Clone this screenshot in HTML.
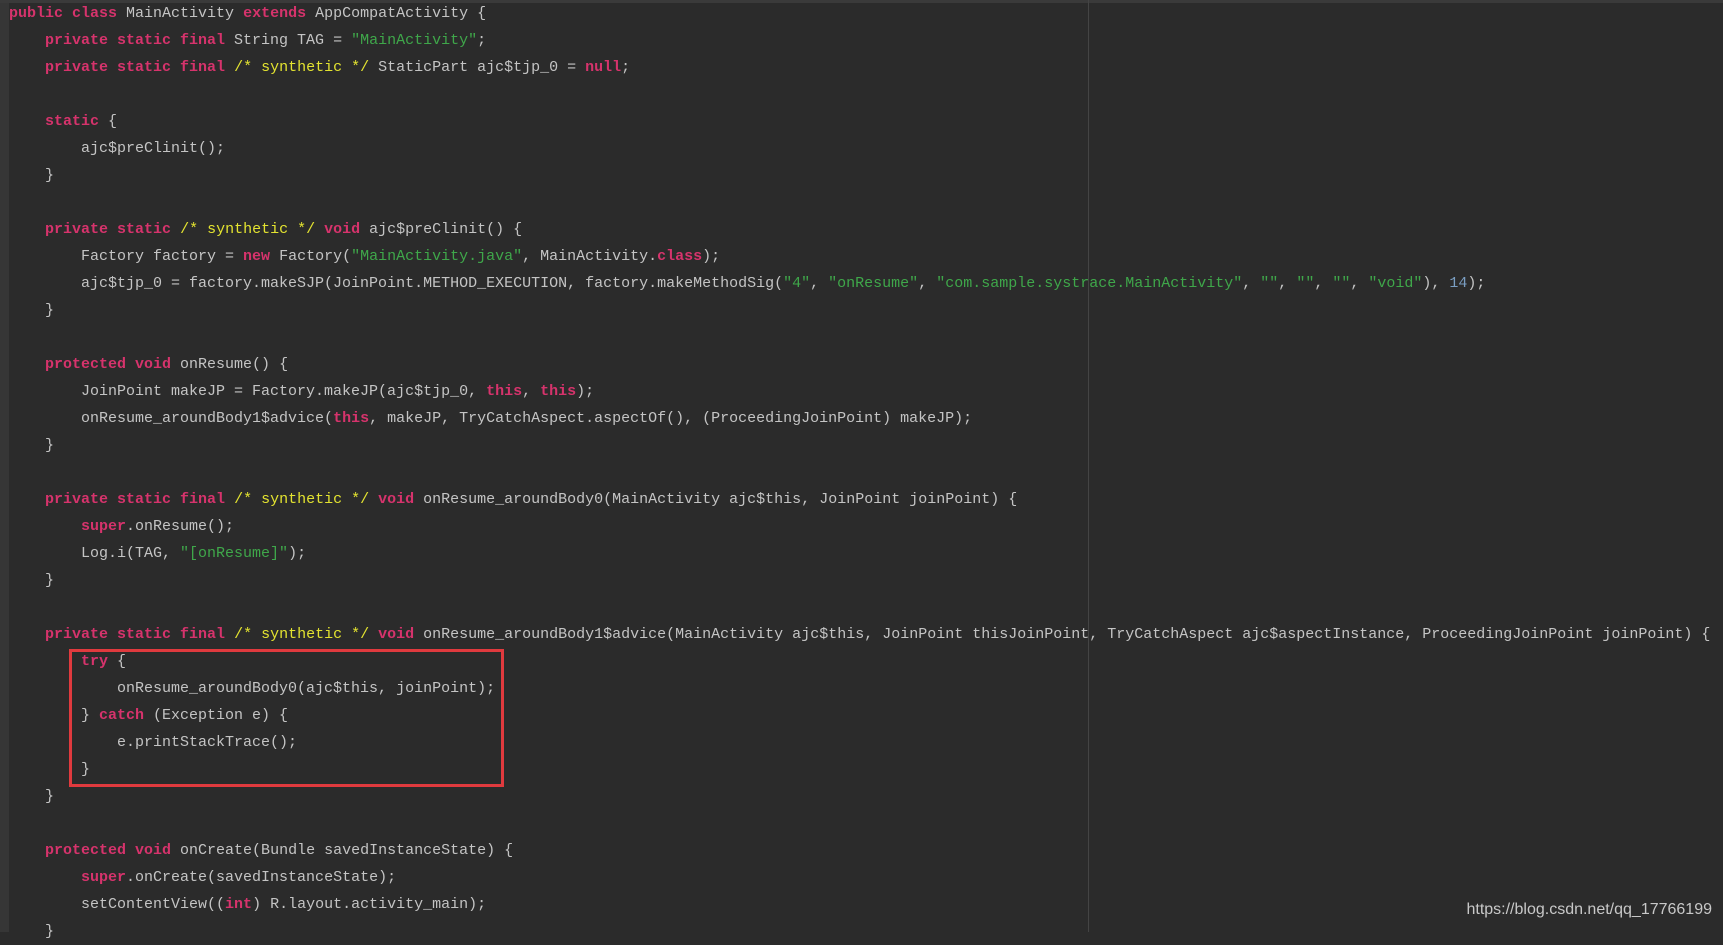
<!DOCTYPE html>
<html><head><meta charset="utf-8"><style>
html,body{margin:0;padding:0;}
body{width:1723px;height:932px;background:#2b2b2b;overflow:hidden;position:relative;}
.gut{position:absolute;left:0;top:0;width:9px;height:932px;background:#363636;}
.topb{position:absolute;left:0;top:0;width:1723px;height:3px;background:#3a3a3a;}
.vl{position:absolute;left:1088px;top:0;width:1px;height:932px;background:#444;}
pre{position:absolute;left:9px;top:0;margin:0;font-family:"Liberation Mono",monospace;font-size:15px;line-height:27px;color:#c4c4c4;}
.k{color:#d6336c;font-weight:bold;}
.s{color:#3fa74a;}
.c{color:#e3e330;}
.n{color:#7a9ec2;}
.box{position:absolute;left:69px;top:649px;width:429px;height:132px;border:3px solid #e03a3e;}
.wm{position:absolute;right:11px;top:901px;font-family:"Liberation Sans",sans-serif;font-size:16px;color:#c8c8c8;}
</style></head><body>
<div class="gut"></div><div class="topb"></div><div class="vl"></div>
<pre><span class="k">public class</span> MainActivity <span class="k">extends</span> AppCompatActivity {
    <span class="k">private static final</span> String TAG = <span class="s">"MainActivity"</span>;
    <span class="k">private static final</span> <span class="c">/* synthetic */</span> StaticPart ajc$tjp_0 = <span class="k">null</span>;

    <span class="k">static</span> {
        ajc$preClinit();
    }

    <span class="k">private static</span> <span class="c">/* synthetic */</span> <span class="k">void</span> ajc$preClinit() {
        Factory factory = <span class="k">new</span> Factory(<span class="s">"MainActivity.java"</span>, MainActivity.<span class="k">class</span>);
        ajc$tjp_0 = factory.makeSJP(JoinPoint.METHOD_EXECUTION, factory.makeMethodSig(<span class="s">"4"</span>, <span class="s">"onResume"</span>, <span class="s">"com.sample.systrace.MainActivity"</span>, <span class="s">""</span>, <span class="s">""</span>, <span class="s">""</span>, <span class="s">"void"</span>), <span class="n">14</span>);
    }

    <span class="k">protected void</span> onResume() {
        JoinPoint makeJP = Factory.makeJP(ajc$tjp_0, <span class="k">this</span>, <span class="k">this</span>);
        onResume_aroundBody1$advice(<span class="k">this</span>, makeJP, TryCatchAspect.aspectOf(), (ProceedingJoinPoint) makeJP);
    }

    <span class="k">private static final</span> <span class="c">/* synthetic */</span> <span class="k">void</span> onResume_aroundBody0(MainActivity ajc$this, JoinPoint joinPoint) {
        <span class="k">super</span>.onResume();
        Log.i(TAG, <span class="s">"[onResume]"</span>);
    }

    <span class="k">private static final</span> <span class="c">/* synthetic */</span> <span class="k">void</span> onResume_aroundBody1$advice(MainActivity ajc$this, JoinPoint thisJoinPoint, TryCatchAspect ajc$aspectInstance, ProceedingJoinPoint joinPoint) {
        <span class="k">try</span> {
            onResume_aroundBody0(ajc$this, joinPoint);
        } <span class="k">catch</span> (Exception e) {
            e.printStackTrace();
        }
    }

    <span class="k">protected void</span> onCreate(Bundle savedInstanceState) {
        <span class="k">super</span>.onCreate(savedInstanceState);
        setContentView((<span class="k">int</span>) R.layout.activity_main);
    }
</pre>
<div class="box"></div>
<div class="wm">https://blog.csdn.net/qq_17766199</div>
</body></html>
